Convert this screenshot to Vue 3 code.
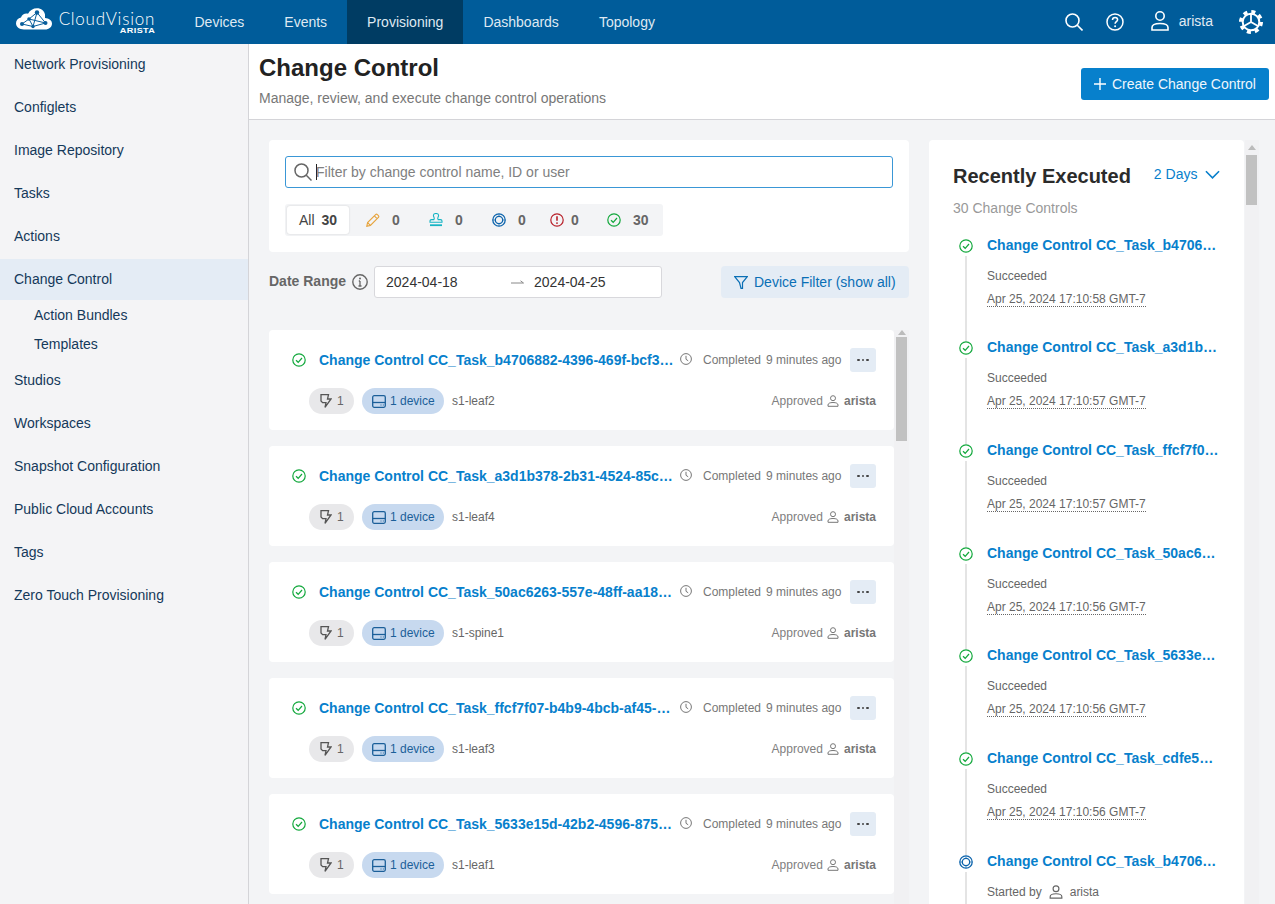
<script setup>
const navTabs = [
  { label: 'Devices' },
  { label: 'Events' },
  { label: 'Provisioning', active: true },
  { label: 'Dashboards' },
  { label: 'Topology' },
]
const sideTop = ['Network Provisioning', 'Configlets', 'Image Repository', 'Tasks', 'Actions']
const sideBottom = ['Studios', 'Workspaces', 'Snapshot Configuration', 'Public Cloud Accounts', 'Tags', 'Zero Touch Provisioning']
const statuses = [
  { icon: 'i-pencil', count: 0, cls: 'pencil' },
  { icon: 'i-stamp', count: 0, cls: 'stamp' },
  { icon: 'i-ring', count: 0, cls: 'ring' },
  { icon: 'i-alert', count: 0, cls: 'alert narrow' },
  { icon: 'i-check', count: 30, cls: 'ok' },
]
const cards = [
  { id: 'b4706882-4396-469f-bcf3-7a91d0e2c511', device: 's1-leaf2' },
  { id: 'a3d1b378-2b31-4524-85cd-1e66fa09b372', device: 's1-leaf4' },
  { id: '50ac6263-557e-48ff-aa18-c2d47b8013ee', device: 's1-spine1' },
  { id: 'ffcf7f07-b4b9-4bcb-af45-90d3e17c6a24', device: 's1-leaf3' },
  { id: '5633e15d-42b2-4596-8751-3fb0a6de9c48', device: 's1-leaf1' },
  { id: 'cdfe5a21-7c10-4e3b-9a62-d18f4b70ce35', device: 's1-leaf5' },
]
const recent = [
  { id: 'b4706882-4396-469f-bcf3', time: 'Apr 25, 2024 17:10:58 GMT-7' },
  { id: 'a3d1b378-2b31-4524-85cd', time: 'Apr 25, 2024 17:10:57 GMT-7' },
  { id: 'ffcf7f07-b4b9-4bcb-af45', time: 'Apr 25, 2024 17:10:57 GMT-7' },
  { id: '50ac6263-557e-48ff-aa18', time: 'Apr 25, 2024 17:10:56 GMT-7' },
  { id: '5633e15d-42b2-4596-8751', time: 'Apr 25, 2024 17:10:56 GMT-7' },
  { id: 'cdfe5a21-7c10-4e3b-9a62', time: 'Apr 25, 2024 17:10:56 GMT-7' },
  { id: 'b4706882-4396-469f-bcf3', running: true },
]
</script>

<template>
  <div class="app">
    <svg class="defs" width="0" height="0" aria-hidden="true">
      <symbol id="i-check" viewBox="0 0 14 14">
        <circle cx="7" cy="7" r="6.2" fill="none" stroke="currentColor" stroke-width="1.2" />
        <path d="M4 7.2 6.2 9.3 10 5" fill="none" stroke="currentColor" stroke-width="1.2" />
      </symbol>
      <symbol id="i-ring" viewBox="0 0 14 14">
        <circle cx="7" cy="7" r="6.2" fill="none" stroke="currentColor" stroke-width="1.3" />
        <circle cx="7" cy="7" r="3.7" fill="none" stroke="currentColor" stroke-width="1.3" />
        <path d="M7 .8v2.5M7 10.7v2.5M.8 7h2.5M10.7 7h2.5" stroke="currentColor" stroke-width=".6" />
      </symbol>
      <symbol id="i-alert" viewBox="0 0 14 14">
        <circle cx="7" cy="7" r="6.2" fill="none" stroke="currentColor" stroke-width="1.2" />
        <path d="M7 3.2v4.6" stroke="currentColor" stroke-width="1.6" />
        <circle cx="7" cy="10.1" r=".95" fill="currentColor" />
      </symbol>
      <symbol id="i-pencil" viewBox="0 0 14 14">
        <path d="M.8 13.2 1.6 9.6 9.6 1.6a1.3 1.3 0 0 1 1.8 0l1 1a1.3 1.3 0 0 1 0 1.8L4.4 12.4ZM1.6 9.6l2.8 2.8M8.3 2.9l2.8 2.8" fill="none" stroke="currentColor" stroke-width="1.1" />
      </symbol>
      <symbol id="i-stamp" viewBox="0 0 14 14">
        <path d="M5.2 6.6V5.2C5.2 4 4.4 3.6 4.4 2.5 4.4 1.2 5.5.5 7 .5s2.6.7 2.6 2c0 1.1-.8 1.5-.8 2.7v1.4M5.2 6.6H2.6c-1 0-1.6.6-1.6 1.5v1.2h12V8.1c0-.9-.6-1.5-1.6-1.5H8.8" fill="none" stroke="currentColor" stroke-width="1.1" />
        <path d="M1 11.3h12v1.8H1z" fill="currentColor" />
      </symbol>
      <symbol id="i-person" viewBox="0 0 12 12">
        <circle cx="6" cy="3.2" r="2.5" fill="none" stroke="currentColor" stroke-width="1" />
        <path d="M1 11.3V10c0-1.5 1.6-2.5 5-2.5s5 1 5 2.5v1.3Z" fill="none" stroke="currentColor" stroke-width="1" />
      </symbol>
    </svg>

    <header class="topbar">
      <div class="brand">
        <svg class="cloud" viewBox="0 0 36 22" width="36" height="22">
          <path d="M8 21.5C3.2 21.5 0 18.8 0 15.3 0 12.3 2 10.2 5 9.6 6 6.4 9 5 12 5.7 14 2.2 17.2.3 21 .3c4.2 0 7.4 2.6 8 6.3.1.9 0 2 0 3.3 3.8.3 7 2.2 7 5.6 0 3.5-3 6-7 6Z" fill="#fff" />
          <path d="M6 16 13 11 21 4.5 29.5 15 17 18.5 6 16M13 11 17 18.5 21 4.5M13 11 29.5 15" fill="none" stroke="#0a5f9c" stroke-width="1" />
          <circle cx="6" cy="16" r="2" fill="#0a5f9c" />
          <circle cx="13" cy="11" r="1.8" fill="#0a5f9c" />
          <circle cx="21" cy="4.5" r="2.2" fill="#0a5f9c" />
          <circle cx="29.5" cy="15" r="2" fill="#0a5f9c" />
          <circle cx="17" cy="18.5" r="1.7" fill="#0a5f9c" />
        </svg>
        <div class="wordmark">
          <span class="wm-main">CloudVision</span>
          <span class="wm-sub">ARISTA</span>
        </div>
      </div>
      <nav class="tabs">
        <a v-for="t in navTabs" :key="t.label" class="tab" :class="{ active: t.active }">{{ t.label }}</a>
      </nav>
      <div class="top-actions">
        <svg class="ti-search" viewBox="0 0 18 18" width="18" height="18">
          <circle cx="7.5" cy="7.5" r="6.5" fill="none" stroke="#fff" stroke-width="1.6" />
          <path d="M12.3 12.3 17.5 17.5" stroke="#fff" stroke-width="1.6" />
        </svg>
        <svg class="ti-help" viewBox="0 0 18 18" width="18" height="18">
          <circle cx="9" cy="9" r="8" fill="none" stroke="#fff" stroke-width="1.5" />
          <path d="M6.5 7c0-1.6 1.1-2.5 2.6-2.5S11.6 5.4 11.6 6.8c0 1.8-2.5 1.9-2.5 3.9" fill="none" stroke="#fff" stroke-width="1.5" />
          <circle cx="9.1" cy="13.2" r="1" fill="#fff" />
        </svg>
        <svg class="ti-user" viewBox="0 0 18 20" width="18" height="20">
          <circle cx="9" cy="5" r="4.2" fill="none" stroke="#fff" stroke-width="1.6" />
          <path d="M1 19v-2.5c0-2.5 2.8-4 8-4s8 1.5 8 4V19Z" fill="none" stroke="#fff" stroke-width="1.6" />
        </svg>
        <span class="top-user">arista</span>
        <svg class="ti-gear" viewBox="0 0 24 24" width="24" height="24">
          <circle cx="12" cy="12" r="10.3" fill="none" stroke="#fff" stroke-width="3.4" stroke-dasharray="4.05 4.04" />
          <circle cx="12" cy="12" r="8.3" fill="none" stroke="#fff" stroke-width="2" />
          <path d="M12 12 12 4M12 12 5.1 16M12 12 18.9 16" stroke="#fff" stroke-width="1.8" />
        </svg>
      </div>
    </header>

    <div class="body">
      <aside class="side">
        <a v-for="s in sideTop" :key="s" class="side-item">{{ s }}</a>
        <a class="side-item current">Change Control</a>
        <div class="sub">
          <a class="sub-item">Action Bundles</a>
          <a class="sub-item">Templates</a>
        </div>
        <a v-for="s in sideBottom" :key="s" class="side-item">{{ s }}</a>
      </aside>

      <main class="main">
        <div class="head">
          <div>
            <h1>Change Control</h1>
            <p>Manage, review, and execute change control operations</p>
          </div>
          <button class="create">
            <svg viewBox="0 0 12 12" width="12" height="12"><path d="M6 0v12M0 6h12" stroke="#fff" stroke-width="1.4" /></svg>
            Create Change Control
          </button>
        </div>

        <div class="content">
          <section class="left">
            <div class="filter-panel">
              <div class="search">
                <svg viewBox="0 0 18 18" width="18" height="18">
                  <circle cx="7.5" cy="7.5" r="6.5" fill="none" stroke="#666" stroke-width="1.5" />
                  <path d="M12.3 12.3 17.5 17.5" stroke="#666" stroke-width="1.5" />
                </svg>
                <span class="caret"></span>
                <span class="ph">Filter by change control name, ID or user</span>
              </div>
              <div class="stat-bar">
                <div class="stat-all">All <b>30</b></div>
                <div v-for="s in statuses" :key="s.icon" class="stat" :class="s.cls">
                  <svg width="14" height="14"><use :href="'#' + s.icon" /></svg>
                  <b>{{ s.count }}</b>
                </div>
              </div>
            </div>

            <div class="date-row">
              <span class="date-label">Date Range</span>
              <svg class="info" viewBox="0 0 16 16" width="16" height="16">
                <circle cx="8" cy="8" r="7.2" fill="none" stroke="#666" stroke-width="1.4" />
                <path d="M8 7v5M6.5 12h3M6.8 7H8" stroke="#666" stroke-width="1.3" fill="none" />
                <circle cx="8" cy="4.5" r="1" fill="#666" />
              </svg>
              <div class="date-input">
                <span class="d1">2024-04-18</span>
                <svg viewBox="0 0 13 4" width="13" height="4"><path d="M0 3h12.5L9.5 .8" fill="none" stroke="#888" stroke-width="1" /></svg>
                <span class="d2">2024-04-25</span>
              </div>
              <button class="device-filter">
                <svg viewBox="0 0 14 13" width="14" height="13"><path d="M.7.7h12.6L8.5 6.5V12.3H7L5.5 6.5Z" fill="none" stroke="#0a6fb5" stroke-width="1.2" /></svg>
                Device Filter (show all)
              </button>
            </div>

            <div class="list-wrap">
              <div class="list">
                <article v-for="c in cards" :key="c.id" class="card">
                  <div class="card-top">
                    <svg class="ok-ic" width="14" height="14"><use href="#i-check" /></svg>
                    <a class="card-title">Change Control CC_Task_{{ c.id }}</a>
                    <svg class="clock" viewBox="0 0 12 12" width="12" height="12">
                      <circle cx="6" cy="6" r="5.4" fill="none" stroke="#777" stroke-width="1" />
                      <path d="M6 2.8V6.3L8.2 7.8" fill="none" stroke="#777" stroke-width="1" />
                    </svg>
                    <span class="when">Completed</span>
                    <span class="when ago">9 minutes ago</span>
                    <button class="more"><i></i><i></i><i></i></button>
                  </div>
                  <div class="card-bottom">
                    <span class="pill grey">
                      <svg viewBox="0 0 12 14" width="12" height="14"><path d="M1 .7H8.5L7.5 5H11L5 13.3 6 8.6H2.6L1 7Z" fill="none" stroke="#555" stroke-width="1.3" /></svg>
                      1
                    </span>
                    <span class="pill blue">
                      <svg viewBox="0 0 14 13" width="14" height="13"><rect x=".7" y=".7" width="12.6" height="11.6" rx="1.5" fill="none" stroke="#1b5f99" stroke-width="1.3" /><path d="M.7 7.5h12.6" stroke="#1b5f99" stroke-width="1.3" /><path d="M8.5 10h1M10.8 10h1" stroke="#1b5f99" stroke-width="1" /></svg>
                      1 device
                    </span>
                    <span class="dev-name">{{ c.device }}</span>
                    <span class="approved">Approved</span>
                    <svg class="person" width="12" height="12"><use href="#i-person" /></svg>
                    <b class="approver">arista</b>
                  </div>
                </article>
              </div>
              <div class="sbar sbar-left"><span class="up"></span><span class="thumb"></span></div>
            </div>
          </section>

          <section class="right">
            <div class="recent">
              <div class="recent-head">
                <h2>Recently Executed</h2>
                <a class="days">2 Days
                  <svg viewBox="0 0 16 9" width="15" height="9"><path d="M1 1 8 8 15 1" fill="none" stroke="#0a80cc" stroke-width="1.7" /></svg>
                </a>
              </div>
              <div class="recent-count">30 Change Controls</div>
              <div class="timeline">
                <div v-for="(r, i) in recent" :key="i" class="tl-item">
                  <div class="tl-rail">
                    <svg class="tl-icon" :class="r.running ? 'run' : 'ok-ic'" width="14" height="14"><use :href="r.running ? '#i-ring' : '#i-check'" /></svg>
                    <span class="tl-line"></span>
                  </div>
                  <div class="tl-body">
                    <a class="tl-title">Change Control CC_Task_{{ r.id }}</a>
                    <template v-if="!r.running">
                      <div class="tl-state">Succeeded</div>
                      <div class="tl-time"><span>{{ r.time }}</span></div>
                    </template>
                    <div v-else class="tl-state started">
                      Started by
                      <svg width="14" height="14"><use href="#i-person" /></svg>
                      arista
                    </div>
                  </div>
                </div>
              </div>
            </div>
            <div class="sbar sbar-right"><span class="up"></span><span class="thumb"></span></div>
          </section>
        </div>
      </main>
    </div>
  </div>
</template>

<style>
html, body { margin: 0; height: 100%; overflow: hidden; }
</style>

<style scoped>
.app {
  height: 100vh;
  display: flex;
  flex-direction: column;
  font-family: "Liberation Sans", Arial, sans-serif;
  font-size: 14px;
  color: #222;
  overflow: hidden;
}
.defs { position: absolute; }
.topbar {
  height: 44px;
  flex: none;
  background: #005c9a;
  display: flex;
  align-items: stretch;
  color: #e1ebf3;
}
.brand { width: 174.5px; flex: none; display: flex; align-items: center; padding-left: 16px; box-sizing: border-box; }
.cloud { margin-top: -6px; }
.wordmark { margin-left: 7px; display: flex; flex-direction: column; align-items: flex-end; line-height: 1; width: 96px; }
.wm-main { font-family: Lato, "Liberation Sans", sans-serif; font-weight: 300; font-size: 17px; letter-spacing: .75px; color: #fff; white-space: nowrap; }
.wm-sub { font-size: 7px; font-weight: 700; letter-spacing: .3px; color: #fff; transform: scaleX(1.3); transform-origin: right; }
.tabs { display: flex; }
.tab { padding: 0 20px; display: flex; align-items: center; color: #dfe9f2; }
.tab.active { background: #003c63; }
.top-actions { margin-left: auto; display: flex; align-items: center; padding-right: 12px; }
.ti-search { margin-right: 23px; }
.ti-help { margin-right: 27px; }
.ti-user { margin-right: 10px; margin-top: -3px; }
.top-user { margin-right: 26px; margin-top: -3px; }

.body { flex: 1; min-height: 0; display: flex; }
.side {
  width: 249px;
  box-sizing: border-box;
  flex: none;
  background: #f4f4f6;
  border-right: 1px solid #d4d4d8;
  display: flex;
  flex-direction: column;
  gap: 2px;
  color: #14395a;
}
.side-item { height: 41px; box-sizing: border-box; padding: 0 0 2px 14px; display: flex; align-items: center; flex: none; }
.side-item.current { background: #e4ecf5; }
.sub { margin: -1px 0; height: 58px; flex: none; }
.sub-item { height: 29px; box-sizing: border-box; display: flex; align-items: center; padding: 0 0 2px 34px; }

.main { flex: 1; min-width: 0; display: flex; flex-direction: column; background: #f3f4f6; }
.head {
  height: 76px;
  box-sizing: border-box;
  flex: none;
  background: #fff;
  border-bottom: 1px solid #d4d4d8;
  padding: 0 6px 0 10px;
  display: flex;
  justify-content: space-between;
  align-items: flex-start;
}
.head h1 { margin: 9px 0 0; font-size: 24px; line-height: 30px; font-weight: 700; color: #222; }
.head p { margin: 6px 0 0; color: #777; line-height: 18px; }
.create {
  margin-top: 24px;
  width: 188px;
  height: 32px;
  border: 0;
  border-radius: 3px;
  background: #0780cc;
  color: #eef6fc;
  font: inherit;
  display: flex;
  align-items: center;
  justify-content: center;
  gap: 6px;
  padding: 0;
}

.content { flex: 1; min-height: 0; display: flex; padding: 20px 17px 0 20px; gap: 20px; overflow: hidden; }
.left { width: 640px; flex: none; display: flex; flex-direction: column; min-height: 0; }
.filter-panel { background: #fff; border-radius: 4px; height: 112px; box-sizing: border-box; padding: 16px; flex: none; }
.search {
  height: 32px;
  box-sizing: border-box;
  border: 1px solid #3a97d6;
  border-radius: 3px;
  display: flex;
  align-items: center;
  padding-left: 8px;
}
.caret { width: 1px; height: 16px; background: #222; margin-left: 4px; }
.ph { color: #808080; margin-left: -1px; }
.stat-bar {
  margin-top: 16px;
  width: 378px;
  height: 32px;
  background: #f3f4f6;
  border-radius: 3px;
  display: flex;
  align-items: center;
  padding: 0 0 0 2px;
  box-sizing: border-box;
}
.stat-all {
  width: 62px;
  flex: none;
  height: 28px;
  box-sizing: border-box;
  padding-left: 12px;
  display: flex;
  align-items: center;
  gap: 7px;
  background: #fff;
  border-radius: 3px;
  box-shadow: 0 0 2px rgba(0, 0, 0, .16);
  color: #444;
}
.stat-all b { color: #444; }
.stat { width: 63px; display: flex; align-items: center; gap: 12px; flex: none; color: #666; box-sizing: border-box; }
.stat:nth-child(2) { margin-left: 17px; }
.stat.ring { width: 58px; }
.stat.narrow { width: 57px; gap: 7px; }
.stat b { color: #666; }
.pencil svg { color: #e6a33c; }
.stamp svg { color: #16b4c4; }
.ring svg { color: #0e65ad; }
.alert svg { color: #b8202a; }
.ok svg { color: #12a83c; }

.date-row { display: flex; align-items: center; height: 32px; margin-top: 14px; flex: none; }
.date-label { font-weight: 700; color: #666; margin-top: -2px; }
.info { margin-left: 6px; }
.date-input {
  margin-left: 6px;
  width: 288px;
  height: 32px;
  box-sizing: border-box;
  background: #fff;
  border: 1px solid #d8d8dc;
  border-radius: 3px;
  display: flex;
  align-items: center;
  padding-left: 11px;
  color: #333;
}
.date-input svg { margin-left: 34px; margin-right: 10px; }
.d1 { width: 91px; }
.device-filter {
  margin-left: auto;
  width: 188px;
  height: 32px;
  border: 0;
  border-radius: 4px;
  background: #e4ecf5;
  color: #0a6fb5;
  font: inherit;
  padding: 0 0 0 13px;
  display: flex;
  align-items: center;
  gap: 6px;
}

.list-wrap { flex: 1; min-height: 0; margin-top: 32px; display: flex; overflow: hidden; }
.list { width: 625px; flex: none; display: flex; flex-direction: column; gap: 16px; overflow: hidden; }
.card { height: 100px; flex: none; background: #fff; border-radius: 4px; box-sizing: border-box; padding: 18px 18px 0 23px; }
.card-top { display: flex; align-items: center; height: 24px; }
.ok-ic { color: #12a83c; flex: none; }
.card-title {
  margin-left: 13px;
  width: 356px;
  flex: none;
  font-weight: 700;
  color: #0780cc;
  white-space: nowrap;
  overflow: hidden;
  text-overflow: ellipsis;
}
.clock { margin-left: 5px; margin-top: -3px; flex: none; }
.when { font-size: 12px; color: #777; margin-left: 11px; white-space: nowrap; }
.when.ago { margin-left: 5px; }
.more {
  margin-left: auto;
  width: 26px;
  height: 24px;
  border: 0;
  border-radius: 3px;
  padding: 0;
  background: #e4ecf5;
  display: flex;
  align-items: center;
  justify-content: center;
  gap: 2px;
}
.more i { width: 2.5px; height: 2.5px; background: #444; border-radius: 50%; }
.card-bottom { display: flex; align-items: center; height: 26px; margin-top: 16px; padding-left: 17px; font-size: 12px; }
.pill { height: 26px; border-radius: 13px; display: flex; align-items: center; box-sizing: border-box; }
.pill.grey { width: 45px; flex: none; background: #e8e8ea; color: #666; padding-left: 11px; gap: 5px; }
.pill.blue { width: 82px; flex: none; margin-left: 8px; background: #c7d9ef; color: #1b5f99; padding-left: 10px; gap: 4px; }
.dev-name { margin-left: 8px; color: #666; }
.approved { margin-left: auto; color: #808080; }
.person { margin-left: 4px; color: #777; flex: none; }
.approver { margin-left: 5px; color: #777; }

.sbar { flex: none; position: relative; width: 15px; }
.sbar .thumb { position: absolute; background: #c1c1c1; left: 2px; width: 11px; }
.sbar .up { position: absolute; left: 3.5px; border: 4px solid transparent; border-top: 0; border-bottom: 5px solid #bbb; }
.sbar-left { background: #f1f1f3; }
.sbar-left .thumb { top: 7px; height: 104px; }
.sbar-left .up { top: 0; left: 3.5px; }
.sbar-right { background: #f1f1f3; width: 14px; }
.sbar-right .thumb { top: 15px; height: 50px; left: 1px; }
.sbar-right .up { top: 5px; left: 3px; }

.right { width: 330px; flex: none; display: flex; min-height: 0; gap: 1px; }
.recent { width: 315px; flex: none; background: #fff; border-radius: 4px 4px 0 0; box-sizing: border-box; padding: 24px 0 0 24px; overflow: hidden; }
.recent-head { display: flex; align-items: center; height: 24px; white-space: nowrap; }
.recent-head h2 { margin: 0; font-size: 20px; font-weight: 700; color: #2b2b2b; line-height: 24px; }
.days { margin-left: 23px; display: flex; align-items: center; gap: 8px; color: #0780cc; margin-top: -4px; }
.recent-count { color: #999; margin-top: 10px; line-height: 20px; }
.timeline { margin-top: 16.7px; margin-left: 5px; }
.tl-item { height: 102.7px; display: flex; }
.tl-rail { width: 16px; flex: none; display: flex; flex-direction: column; align-items: center; }
.tl-icon { margin-top: 4px; flex: none; }
.tl-icon.run { color: #0e65ad; }
.tl-line { width: 2px; background: #e4e4e4; flex: 1; margin-top: 3px; margin-bottom: -4px; }
.tl-body { margin-left: 13px; width: 233px; min-width: 0; }
.tl-title { display: block; font-weight: 700; color: #0780cc; line-height: 20px; white-space: nowrap; overflow: hidden; text-overflow: ellipsis; }
.tl-state { margin-top: 14px; font-size: 12px; line-height: 14px; color: #666; }
.started { display: flex; align-items: center; gap: 7px; }
.started svg { color: #666; }
.tl-time { margin-top: 9px; font-size: 12px; line-height: 14px; color: #666; }
.tl-time span { border-bottom: 1px dotted #666; display: inline-block; }
</style>
